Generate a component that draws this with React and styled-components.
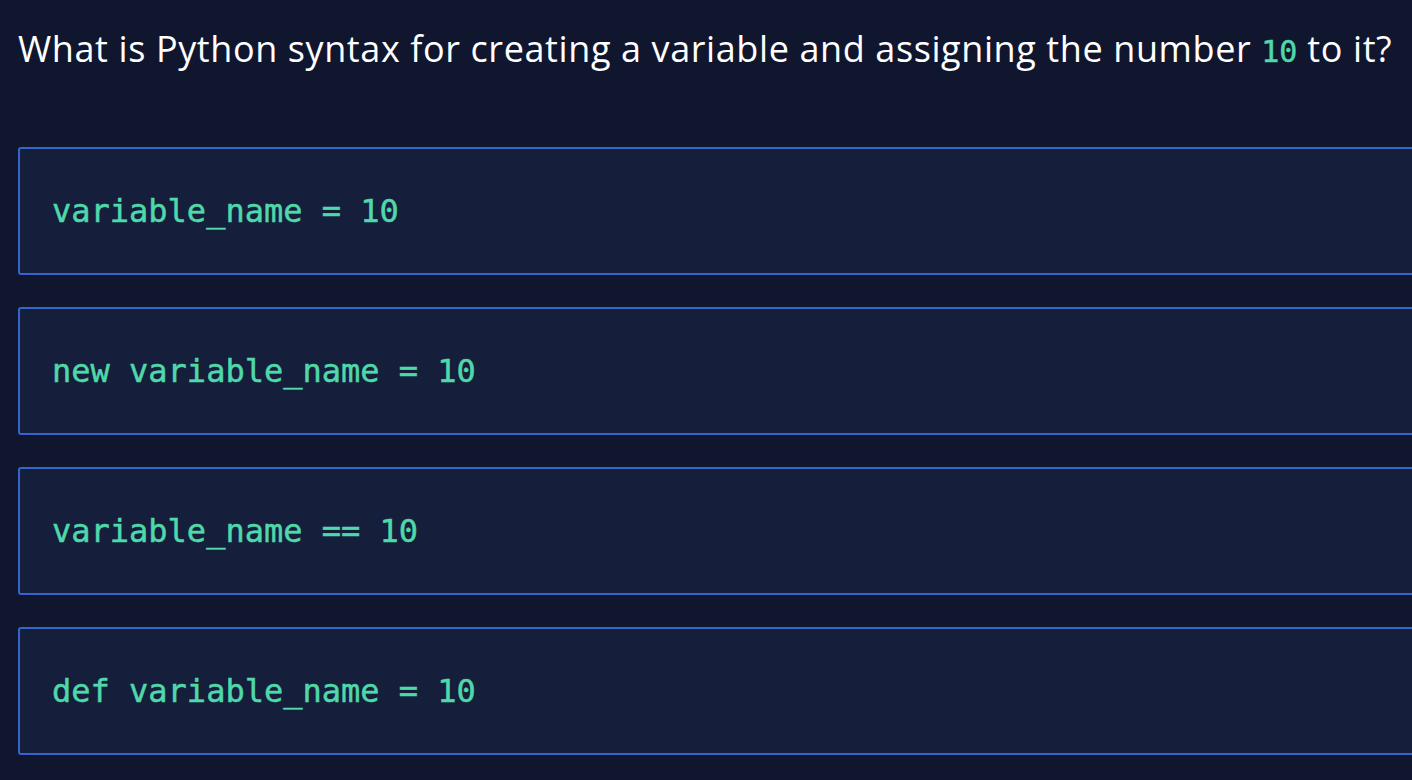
import React from 'react';
import styled, { createGlobalStyle } from 'styled-components';

const GlobalStyle = createGlobalStyle`
  html, body {
    margin: 0;
    padding: 0;
    background: #11162f;
    overflow: hidden;
  }
`;

const options = [
  'variable_name = 10',
  'new variable_name = 10',
  'variable_name == 10',
  'def variable_name = 10',
];

const App = () => (
  <>
    <GlobalStyle />
    <Page>
      <Question>
        What is Python syntax for creating a variable and assigning the number <InlineCode>10</InlineCode> to it?
      </Question>
      <OptionList>
        {options.map((opt) => (
          <OptionCard key={opt}>
            <Code>{opt}</Code>
          </OptionCard>
        ))}
      </OptionList>
    </Page>
  </>
);

const Page = styled.div`
  width: 1412px;
  height: 780px;
  padding: 25px 0 0 18px;
  box-sizing: border-box;
  background: #11162f;
`;

const Question = styled.h1`
  margin: 0 0 71px;
  font-family: 'Open Sans', Lato, sans-serif;
  font-weight: 500;
  font-size: 36px;
  letter-spacing: 0.6px;
  line-height: 48px;
  color: #ffffff;
  white-space: nowrap;
`;

const InlineCode = styled.code`
  font-family: 'DejaVu Sans Mono', monospace;
  font-size: 30px;
  letter-spacing: 0;
  color: #4fd8aa;
  -webkit-text-stroke: 0.5px #4fd8aa;
`;

const OptionList = styled.div`
  display: flex;
  flex-direction: column;
  gap: 32px;
`;

const OptionCard = styled.div`
  width: 1440px;
  height: 128px;
  box-sizing: border-box;
  display: flex;
  align-items: center;
  padding-left: 32px;
  background: #151e3b;
  border: 2px solid #3564cc;
  border-radius: 3px;
`;

const Code = styled.span`
  font-family: 'DejaVu Sans Mono', monospace;
  font-size: 32px;
  color: #4fd8aa;
  -webkit-text-stroke: 0.5px #4fd8aa;
`;

export default App;
